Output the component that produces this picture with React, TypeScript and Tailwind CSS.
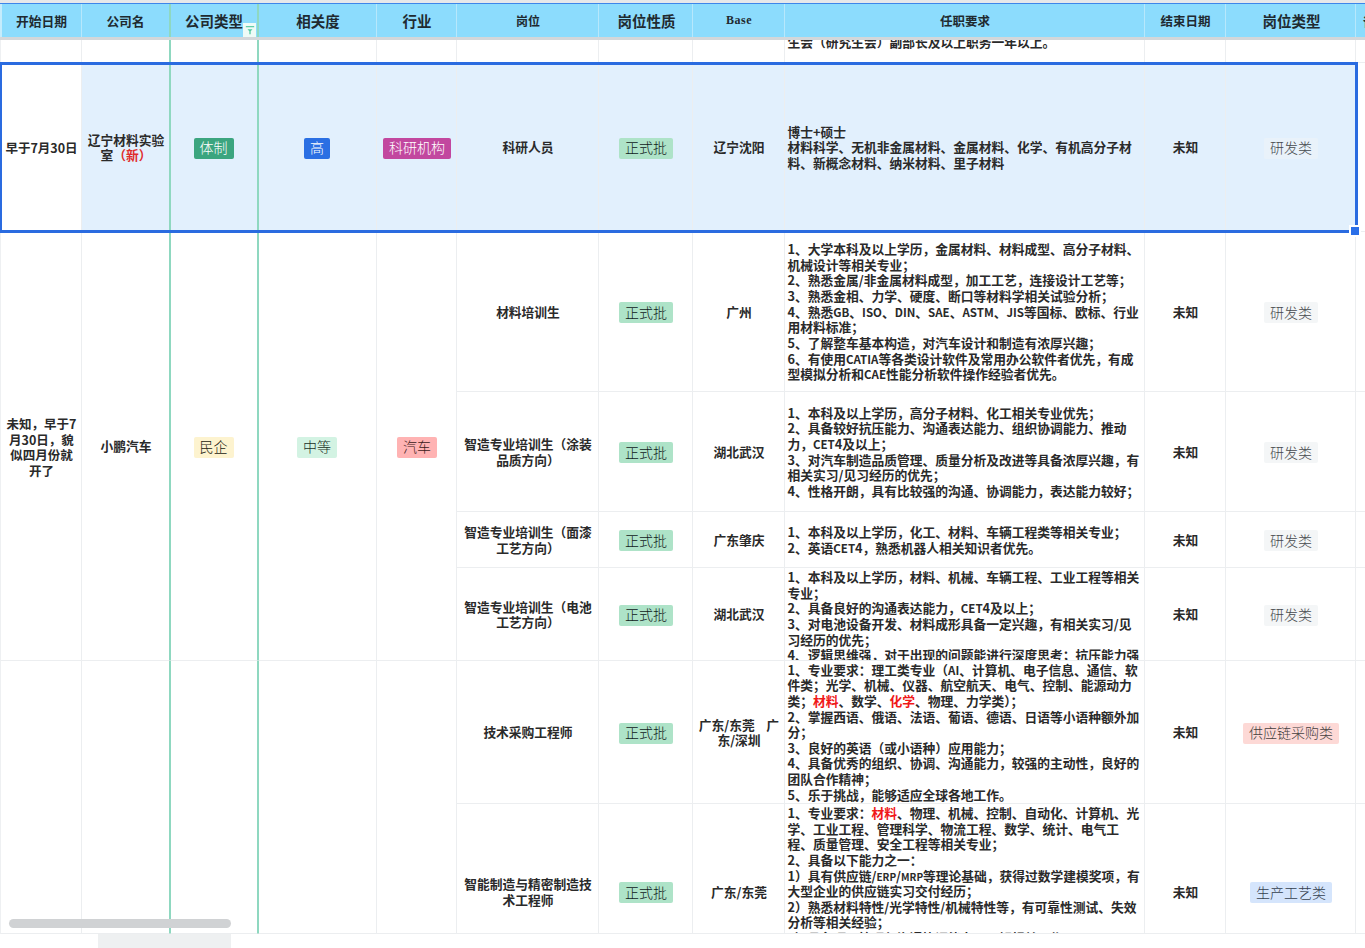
import React from "react";

const R = ({ children }: { children: React.ReactNode }) => <span className="text-[#f01818]">{children}</span>;

const TAGS: Record<string, string> = {
  green: "bg-[#aee3c8] text-[#10201a] w-[54px]",
  gray: "bg-[#f4f6f7] text-[#44484c] w-[54px]",
  grayS: "bg-[#e9f2fa] text-[#44484c] w-[54px]",
};

function Tag({ children, className }: { children: React.ReactNode; className: string }) {
  return (
    <span className={"mt-[2px] flex h-[21px] items-center justify-center rounded-[2px] text-[14px] font-light whitespace-nowrap " + className}>
      {children}
    </span>
  );
}

function Cell({ children, className = "" }: { children?: React.ReactNode; className?: string }) {
  return (
    <div className={"flex min-w-0 items-center justify-center overflow-hidden border-r border-b border-[#eceef0] text-center " + className}>
      {children ? <div className="pl-[1px] whitespace-nowrap">{children}</div> : null}
    </div>
  );
}

function Latin({ text }: { text: React.ReactNode }) {
  if (typeof text !== "string") return <>{text}</>;
  const parts = text.split(/([A-Za-z]+)/);
  return (
    <>
      {parts.map((p, i) =>
        i % 2 === 1 ? (
          <span key={i} className="text-[11.5px] leading-none">
            {p}
          </span>
        ) : (
          <span key={i}>{p}</span>
        ),
      )}
    </>
  );
}

function Jd({ lines, className = "items-center" }: { lines: React.ReactNode[]; className?: string }) {
  return (
    <div className={"flex overflow-hidden border-r border-b border-[#eceef0] pl-[2.5px] text-left leading-[15.65px] " + className}>
      <div className="whitespace-nowrap">
        {lines.map((l, i) => (
          <div key={i} className="h-[15.65px]">
            <Latin text={l} />
          </div>
        ))}
      </div>
    </div>
  );
}

function Head({ children, className = "" }: { children?: React.ReactNode; className?: string }) {
  return (
    <div className={"relative flex items-center justify-center overflow-hidden border-r border-[#b7e8fc] " + className}>
      {children}
    </div>
  );
}

type Row = {
  title: React.ReactNode;
  base: React.ReactNode;
  jd: React.ReactNode[];
  jdClass?: string;
  cellClass?: string;
  kind: React.ReactNode;
};

const rows1: Row[] = [
  {
    title: "材料培训生",
    base: "广州",
    jd: [
      "1、大学本科及以上学历，金属材料、材料成型、高分子材料、",
      "机械设计等相关专业；",
      "2、熟悉金属/非金属材料成型，加工工艺，连接设计工艺等；",
      "3、熟悉金相、力学、硬度、断口等材料学相关试验分析；",
      "4、熟悉GB、ISO、DIN、SAE、ASTM、JIS等国标、欧标、行业",
      "用材料标准；",
      "5、了解整车基本构造，对汽车设计和制造有浓厚兴趣；",
      "6、有使用CATIA等各类设计软件及常用办公软件者优先，有成",
      "型模拟分析和CAE性能分析软件操作经验者优先。",
    ],
    kind: <Tag className={TAGS.gray}>研发类</Tag>,
  },
  {
    title: (
      <>
        智造专业培训生（涂装
        <br />
        品质方向）
      </>
    ),
    base: "湖北武汉",
    jd: [
      "1、本科及以上学历，高分子材料、化工相关专业优先；",
      "2、具备较好抗压能力、沟通表达能力、组织协调能力、推动",
      "力，CET4及以上；",
      "3、对汽车制造品质管理、质量分析及改进等具备浓厚兴趣，有",
      "相关实习/见习经历的优先；",
      "4、性格开朗，具有比较强的沟通、协调能力，表达能力较好；",
    ],
    kind: <Tag className={TAGS.gray}>研发类</Tag>,
  },
  {
    title: (
      <>
        智造专业培训生（面漆
        <br />
        工艺方向）
      </>
    ),
    base: "广东肇庆",
    jd: ["1、本科及以上学历，化工、材料、车辆工程类等相关专业；", "2、英语CET4，熟悉机器人相关知识者优先。"],
    kind: <Tag className={TAGS.gray}>研发类</Tag>,
  },
  {
    title: (
      <>
        智造专业培训生（电池
        <br />
        工艺方向）
      </>
    ),
    base: "湖北武汉",
    jd: [
      "1、本科及以上学历，材料、机械、车辆工程、工业工程等相关",
      "专业；",
      "2、具备良好的沟通表达能力，CET4及以上；",
      "3、对电池设备开发、材料成形具备一定兴趣，有相关实习/见",
      "习经历的优先；",
      "4、逻辑思维强，对于出现的问题能进行深度思考；抗压能力强",
    ],
    jdClass: "items-start pt-[1px]",
    kind: <Tag className={TAGS.gray}>研发类</Tag>,
  },
];

const rows2: Row[] = [
  {
    title: "技术采购工程师",
    base: (
      <>
        广东/东莞&nbsp;&nbsp;&nbsp;&nbsp;广
        <br />
        东/深圳
      </>
    ),
    jd: [
      "1、专业要求：理工类专业（AI、计算机、电子信息、通信、软",
      "件类；光学、机械、仪器、航空航天、电气、控制、能源动力",
      <>
        类；<R>材料</R>、数学、<R>化学</R>、物理、力学类）；
      </>,
      "2、掌握西语、俄语、法语、葡语、德语、日语等小语种额外加",
      "分；",
      "3、良好的英语（或小语种）应用能力；",
      "4、具备优秀的组织、协调、沟通能力，较强的主动性，良好的",
      "团队合作精神；",
      "5、乐于挑战，能够适应全球各地工作。",
    ],
    kind: <Tag className="w-[96px] bg-[#fdd9d6] text-[#443f3f]">供应链采购类</Tag>,
  },
  {
    title: (
      <>
        智能制造与精密制造技
        <br />
        术工程师
      </>
    ),
    base: "广东/东莞",
    jd: [
      <>
        1、专业要求：<R>材料</R>、物理、机械、控制、自动化、计算机、光
      </>,
      "学、工业工程、管理科学、物流工程、数学、统计、电气工",
      "程、质量管理、安全工程等相关专业；",
      "2、具备以下能力之一：",
      <>
        1）具有供应链/<span className="text-[10px] leading-none">ERP</span>/<span className="text-[10px] leading-none">MRP</span>等理论基础，获得过数学建模奖项，有
      </>,
      "大型企业的供应链实习交付经历；",
      "2）熟悉材料特性/光学特性/机械特性等，有可靠性测试、失效",
      "分析等相关经验；",
      "3）具备项目管理与沟通协调能力，了解相关工作；",
    ],
    jdClass: "items-start pt-[1px]",
    cellClass: "pt-[46px]",
    kind: <Tag className="w-[82px] bg-[#d5e5fc] text-[#34404e]">生产工艺类</Tag>,
  },
];

function JobCells({ r }: { r: Row }) {
  const c = r.cellClass ?? "";
  return (
    <>
      <Cell className={c}>{r.title}</Cell>
      <Cell className={c}>
        <Tag className={TAGS.green}>正式批</Tag>
      </Cell>
      <Cell className={c}>{r.base}</Cell>
      <Jd lines={r.jd} className={r.jdClass ?? "items-center"} />
      <Cell className={c}>未知</Cell>
      <Cell className={c}>{r.kind}</Cell>
      <Cell className="border-r-0" />
    </>
  );
}

const teal = "border-r-[#8fd8c0]";
const tealL = "border-l border-l-[#8fd8c0]";
const sel = "bg-[#e2f0fd]";
const first = "border-l border-l-[#eef0f2] pt-[2px] text-[12.5px]";

export default function App() {
  return (
    <div
      className="relative h-[948px] w-[1365px] overflow-hidden bg-white text-[12.75px] leading-[15.5px] font-semibold text-[#2a2a2a]"
      style={{ fontFamily: '"Noto Sans CJK SC", "Liberation Sans", sans-serif' }}
    >
      <div className="h-[4px] border-b border-[#3d86ea] bg-[#e6e8ea]" />
      <div className="grid h-[33px] grid-cols-[82px_88px_88px_119px_80px_142px_94px_92px_360px_81px_130px_9px] bg-[#8cdcfd] text-[#1f2a30]">
        <Head className="border-l-2 border-l-[#c5ecfc]">开始日期</Head>
        <Head className={teal}>公司名</Head>
        <Head className={"text-[14.5px] " + teal + " " + tealL}>
          <span>公司类型</span>
          <span className="absolute right-[1px] bottom-0 flex h-[14px] w-[13px] items-center justify-center bg-[#eefbf7]">
            <svg viewBox="0 0 12 12" className="h-[10px] w-[10px]">
              <path d="M1 2h10" stroke="#55c9a2" strokeWidth="1.4" />
              <path d="M3 5h6L6.8 7.5V11H5.2V7.5z" fill="#55c9a2" />
            </svg>
          </span>
        </Head>
        <Head className={"pl-[1px] text-[14.5px] " + tealL}>相关度</Head>
        <Head className="pl-[1px] text-[14.5px]">行业</Head>
        <Head className="pl-[1px] text-[12px]">岗位</Head>
        <Head className="pl-[2px] text-[14.5px]">岗位性质</Head>
        <Head className="pt-[1px] pl-[1px] text-[12px] font-bold tracking-[0.5px]">
          <span style={{ fontFamily: '"Liberation Serif", serif' }}>Base</span>
        </Head>
        <Head className="pl-[1px] text-[12.5px]">任职要求</Head>
        <Head className="pl-[1px] text-[12.5px]">结束日期</Head>
        <Head className="pl-[2px] text-[14.5px]">岗位类型</Head>
        <Head className="justify-start border-r-0 pl-[7px] text-[14px]">
          <span className="whitespace-nowrap">备注</span>
        </Head>
      </div>
      <div className="h-[3px] bg-[#d3d7da]" />

      <div className="relative">
        <div className="grid h-[894px] grid-cols-[82px_88px_88px_119px_80px_142px_94px_92px_360px_81px_130px_9px] grid-rows-[23px_169px_160px_120px_56px_93px_143px_130px]">
          {/* row above the selection */}
          <Cell className={first} />
          <Cell className={teal} />
          <Cell className={teal + " " + tealL} />
          <Cell className={tealL} />
          <Cell />
          <Cell />
          <Cell />
          <Cell />
          <Jd lines={["生会（研究生会）副部长及以上职务一年以上。"]} className="items-end pb-[12px]" />
          <Cell />
          <Cell />
          <Cell className="border-r-0" />

          {/* selected row */}
          <Cell className={first}>早于7月30日</Cell>
          <Cell className={sel + " " + teal}>
            辽宁材料实验
            <br />
            室<span className="text-[#e02b2b]">（新）</span>
          </Cell>
          <Cell className={sel + " " + teal + " " + tealL}>
            <Tag className="-ml-[2px] w-[40px] bg-[#3ba57f] text-white">体制</Tag>
          </Cell>
          <Cell className={sel + " " + tealL}>
            <Tag className="-ml-[2px] w-[26px] bg-[#2a6fe3] text-white">高</Tag>
          </Cell>
          <Cell className={sel}>
            <Tag className="w-[68px] bg-[#c2479f] text-white">科研机构</Tag>
          </Cell>
          <Cell className={sel}>科研人员</Cell>
          <Cell className={sel}>
            <Tag className={TAGS.green}>正式批</Tag>
          </Cell>
          <Cell className={sel}>辽宁沈阳</Cell>
          <Jd
            lines={["博士+硕士", "材料科学、无机非金属材料、金属材料、化学、有机高分子材", "料、新概念材料、纳米材料、里子材料"]}
            className={sel + " items-center"}
          />
          <Cell className={sel}>未知</Cell>
          <Cell className={sel}>
            <Tag className={TAGS.grayS}>研发类</Tag>
          </Cell>
          <Cell className="border-r-0" />

          {/* 小鹏汽车 */}
          <Cell className={"row-span-4 " + first}>
            未知，早于7
            <br />
            月30日，貌
            <br />
            似四月份就
            <br />
            开了
          </Cell>
          <Cell className={"row-span-4 " + teal}>小鹏汽车</Cell>
          <Cell className={"row-span-4 " + teal + " " + tealL}>
            <Tag className="-ml-[2px] w-[40px] bg-[#fdf3cf] text-[#1a1a10]">民企</Tag>
          </Cell>
          <Cell className={"row-span-4 " + tealL}>
            <Tag className="-ml-[2px] w-[40px] bg-[#d3f3e3] text-[#1a3026]">中等</Tag>
          </Cell>
          <Cell className="row-span-4">
            <Tag className="w-[40px] bg-[#ffb3b3] text-[#3a1a1a]">汽车</Tag>
          </Cell>
          {rows1.map((r, i) => (
            <JobCells key={i} r={r} />
          ))}

          {/* blank merged cells */}
          <Cell className={"row-span-2 " + first} />
          <Cell className={"row-span-2 " + teal} />
          <Cell className={"row-span-2 " + teal + " " + tealL} />
          <Cell className={"row-span-2 " + tealL} />
          <Cell className="row-span-2" />
          {rows2.map((r, i) => (
            <JobCells key={i} r={r} />
          ))}
        </div>

        {/* selection frame */}
        <div className="pointer-events-none absolute top-[22px] left-0 h-[171px] w-[1358px] border-[3px] border-l-2 border-[#2a6be0]" />
        <div className="absolute top-[185px] left-[1349px] flex h-[12px] w-[12px] items-center justify-center bg-white">
          <span className="h-[8px] w-[8px] bg-[#2a6fe8]" />
        </div>
        {/* floating scrollbar */}
        <div className="absolute top-[879px] left-[9px] h-[9px] w-[222px] rounded-full bg-[#d0d2d4]" />
      </div>

      <div className="ml-[98px] h-[14px] w-[133px] bg-[#eef0f1]" />
    </div>
  );
}
